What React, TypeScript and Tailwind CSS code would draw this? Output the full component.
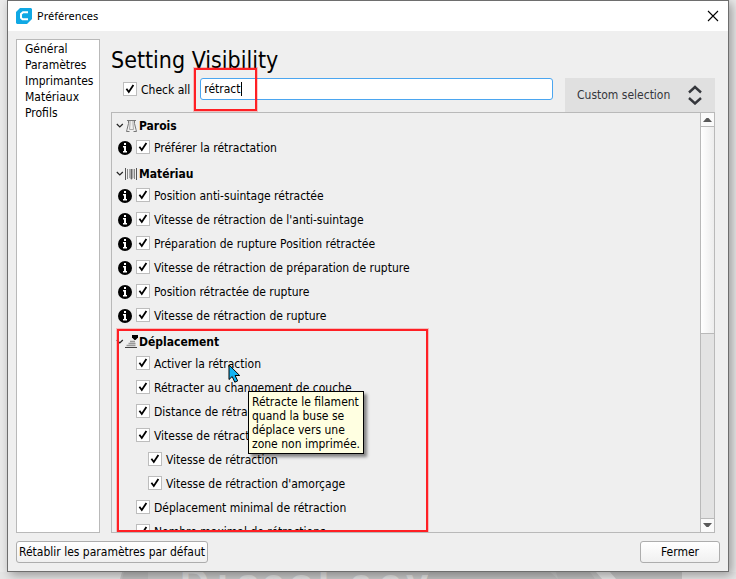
import React, { useState } from 'react';

const pages = ['Général', 'Paramètres', 'Imprimantes', 'Matériaux', 'Profils'];

const sections = [
  {
    name: 'Parois',
    icon: 'walls',
    settings: [{ label: 'Préférer la rétractation', info: true, nested: false }],
  },
  {
    name: 'Matériau',
    icon: 'material',
    settings: [
      { label: 'Position anti-suintage rétractée', info: true, nested: false },
      { label: "Vitesse de rétraction de l'anti-suintage", info: true, nested: false },
      { label: 'Préparation de rupture Position rétractée', info: true, nested: false },
      { label: 'Vitesse de rétraction de préparation de rupture', info: true, nested: false },
      { label: 'Position rétractée de rupture', info: true, nested: false },
      { label: 'Vitesse de rétraction de rupture', info: true, nested: false },
    ],
  },
  {
    name: 'Déplacement',
    icon: 'travel',
    highlighted: true,
    settings: [
      { label: 'Activer la rétraction', info: false, nested: false },
      { label: 'Rétracter au changement de couche', info: false, nested: false },
      { label: 'Distance de rétraction', info: false, nested: false },
      { label: 'Vitesse de rétraction', info: false, nested: false },
      { label: 'Vitesse de rétraction', info: false, nested: true },
      { label: "Vitesse de rétraction d'amorçage", info: false, nested: true },
      { label: 'Déplacement minimal de rétraction', info: false, nested: false },
      { label: 'Nombre maximal de rétractions', info: false, nested: false },
    ],
  },
];

export default function App() {
  const [search, setSearch] = useState('rétract');

  return (
    <div className="h-screen flex flex-col px-[7px] bg-[#ebebeb] overflow-hidden text-xs text-black font-['DejaVu_Sans_Condensed','DejaVu_Sans',sans-serif]">
      {/* Window */}
      <div className="relative z-10 flex-1 min-h-0 flex flex-col border border-[#6e6e6e] bg-[#efefef] shadow-[3px_3px_10px_rgba(0,0,0,0.35)]">
        <header className="h-[30px] shrink-0 flex items-center justify-between px-2 bg-white">
          <div className="flex items-center gap-[5px] font-['Noto_Sans',sans-serif] text-[11px]">
            <Logo />
            <h1>Préférences</h1>
          </div>
          <button aria-label="Fermer la fenêtre">
            <CloseIcon />
          </button>
        </header>

        <div className="flex-1 min-h-0 flex flex-col gap-2 p-2">
          <div className="flex-1 min-h-0 flex gap-[11px]">
            {/* Page list */}
            <nav className="w-[84px] shrink-0 border border-[#b9b9b9] bg-white pl-2 pt-px">
              <ul>
                {pages.map((page) => (
                  <li key={page} className="leading-4">
                    <a href="#">{page}</a>
                  </li>
                ))}
              </ul>
            </nav>

            <main className="flex-1 min-w-0 flex flex-col mr-[5px]">
              <h2 className="pt-[5px] h-[39px] text-[23px] leading-8">Setting Visibility</h2>
              <div className="relative flex items-center h-[34px] pl-3">
                <label className="flex items-center gap-1 pb-2.5">
                  <Check />
                  Check all
                </label>
                <input
                  type="text"
                  aria-label="Filtrer"
                  value={search}
                  onChange={(e) => setSearch(e.target.value)}
                  className="self-start flex-1 min-w-0 h-[22px] ml-2.5 mr-3 px-[3px] rounded-[3px] border border-[#4ba6f0] bg-white outline-none"
                />
                <span className="absolute left-[130px] top-1 w-px h-[14px] bg-black"></span>
                <div className="absolute left-[83px] -top-2.5 w-[63px] h-[43px] border-2 border-[#ff1f24] ring-1 ring-[#ff1f24]/25 pointer-events-none"></div>
                <button className="w-[150px] h-full flex items-center justify-between px-3 bg-[#e0e0e0] text-[#35373c]">
                  Custom selection
                  <SortIcon />
                </button>
              </div>

              {/* Settings */}
              <div className="flex-1 min-h-0 flex border border-[#b9b9b9]">
                <div className="flex-1 min-w-0 overflow-hidden flex flex-col gap-1 pl-1 pt-[3px]">
                  {sections.map((section) => (
                    <Section key={section.name} section={section} />
                  ))}
                </div>
                <Scrollbar />
              </div>
            </main>
          </div>

          <footer className="flex justify-between">
            <button className="h-[22px] px-0.5 rounded-[3px] border border-[#adadad] bg-linear-to-b from-white to-[#f0f0f0] whitespace-nowrap">
              Rétablir les paramètres par défaut
            </button>
            <button className="w-20 h-[22px] rounded-[3px] border border-[#adadad] bg-linear-to-b from-white to-[#f0f0f0]">
              Fermer
            </button>
          </footer>
        </div>
      </div>
      <Backdrop />
    </div>
  );
}

const Check = () => (
  <span className="relative w-[14px] h-[14px] mb-0.5 shrink-0">
    <input type="checkbox" defaultChecked className="block w-[14px] h-[14px] appearance-none border border-[#bdbdbd] bg-white" />
    <svg viewBox="0 0 14 14" className="absolute inset-0 w-[14px] h-[14px] pointer-events-none" fill="none" stroke="#000" strokeWidth="1.8">
      <path d="M3.4 6.8 5.8 10 10.4 3" />
    </svg>
  </span>
);

const Section = ({ section }: { section: (typeof sections)[number] }) => (
  <section className="relative shrink-0">
    <h3 className="h-5 flex items-center font-bold">
      <svg viewBox="0 0 8 8" className="w-2 h-2 mr-px" fill="none" stroke="#222" strokeWidth="1.2">
        <path d="M.8 2 3.8 5 6.8 2" />
      </svg>
      <SectionIcon name={section.icon} />
      {section.name}
    </h3>
    {section.settings.map((setting, i) => (
      <div key={i} className={`h-6 flex items-center ${setting.nested ? 'pl-8' : setting.info ? 'pl-0.5' : 'pl-5'}`}>
        {setting.info && <InfoIcon />}
        <label className="flex items-center gap-1 whitespace-nowrap">
          <Check />
          {setting.label}
        </label>
      </div>
    ))}
    {section.highlighted && (
      <>
        <div className="absolute left-px -top-[3px] w-[311px] h-[203px] border-2 border-[#ff1f24] ring-1 ring-[#ff1f24]/25 pointer-events-none"></div>
        <div role="tooltip" className="absolute left-[132px] top-[59px] w-[116px] h-[63px] pl-[3px] pt-[3px] border border-black bg-[#ffffe1] leading-[14px] whitespace-nowrap shadow-[3px_3px_3px_rgba(0,0,0,0.45)]">
          Rétracte le filament
          <br />
          quand la buse se
          <br />
          déplace vers une
          <br />
          zone non imprimée.
        </div>
        <Pointer />
      </>
    )}
  </section>
);

const Scrollbar = () => (
  <div className="w-[14px] shrink-0 flex flex-col border-l border-[#b9b9b9] bg-[#e3e3e3]">
    <button aria-label="Monter" className="h-[14px] shrink-0 flex items-center justify-center border-b border-[#b9b9b9] bg-[#fafafa]">
      <svg viewBox="0 0 9 5" className="w-[9px] h-[5px]" fill="#595959">
        <path d="M0 5 3.5 1h2L9 5z" />
      </svg>
    </button>
    <div className="basis-[53%] border-b border-[#b9b9b9] bg-linear-to-r from-white to-[#ededed]"></div>
    <div className="basis-[47%]"></div>
    <button aria-label="Descendre" className="h-[14px] shrink-0 flex items-center justify-center border-t border-[#b9b9b9] bg-[#fafafa]">
      <svg viewBox="0 0 9 5" className="w-[9px] h-[5px]" fill="#595959">
        <path d="M0 0h9L5.5 4h-2z" />
      </svg>
    </button>
  </div>
);

const SectionIcon = ({ name }: { name: string }) => (
  <svg viewBox="0 0 14 14" className="w-[14px] h-[14px] shrink-0" fill="none">
    {name === 'walls' && (
      <g stroke="#777">
        <path d="M2 1.5h9M3.5 1.5v3L2 10.500 1.500 12.500h3M9.500 1.500v3L11 10.500l.5 2h-3" />
        <path d="M5 2v3L4.500 10.500h4L8 5V2" stroke="#aaa" />
      </g>
    )}
    {name === 'material' && (
      <g>
        <path d="M.5 1v12M11.5 1v12" stroke="#555" />
        <path d="M2.5 2v10M9.5 2v10" stroke="#888" />
        <path d="M4 2h4.500v8.500L6.500 13 4 10.500z" fill="#aaa" />
        <path d="M6.500 2v10" stroke="#666" />
      </g>
    )}
    {name === 'travel' && (
      <g>
        <path d="M7 0h6v2.500L10.500 5h-1L7 2.500z" fill="#000" />
        <path d="M5 6.500h5M3.500 8.500h7M1.500 10.500h9" stroke="#999" strokeWidth="1.500" />
        <path d="M0 12.500h12" stroke="#444" />
      </g>
    )}
  </svg>
);

const InfoIcon = () => (
  <svg viewBox="0 0 14 14" className="w-[14px] h-[14px] mr-1 shrink-0">
    <circle cx="7" cy="7" r="7" fill="#000" />
    <path d="M6 2h2v2H6zM5 5h3v5h1v1.500H5V10h1V6.500H5z" fill="#fff" />
  </svg>
);

const SortIcon = () => (
  <svg viewBox="0 0 16 20" className="w-4 h-5" fill="none" stroke="#35373c" strokeWidth="2.4">
    <path d="M2 7.500 8 2l6 5.500M2 13l6 5.500L14 13" />
  </svg>
);

const CloseIcon = () => (
  <svg viewBox="0 0 12 12" className="w-3 h-3 mr-px" fill="none" stroke="#000" strokeWidth="1.1">
    <path d="M1 1 11 11M11 1 1 11" />
  </svg>
);

const Logo = () => (
  <svg viewBox="0 0 16 16" className="w-4 h-4">
    <path d="M4 0h11l1 1v10l-5 5H1l-1-1V4z" fill="#10a8e4" />
    <path d="M12 4.300H7L5 6v3.800L6.500 11.300H12" fill="none" stroke="#fff" strokeWidth="2" />
  </svg>
);

const Pointer = () => (
  <svg viewBox="0 0 13 20" className="absolute left-28 top-8 w-[13px] h-5 pointer-events-none">
    <path d="M1 1v14.500l3.200-3 2.600 5.700 2.900-1.300-2.600-5.400h4.600z" fill="#12b4f5" stroke="#000" />
  </svg>
);

// Wallpaper showing under the window
const Backdrop = () => (
  <svg viewBox="0 0 736 7" preserveAspectRatio="xMidYMin slice" className="h-[7px] shrink-0 -mx-[7px]">
    <path d="M0 0h736v7H0z" fill="#e6e6e6" />
    <path d="M122 0h474l6 7H120zM610 0h72v7h-66z" fill="#cacaca" />
    <path d="M124 0h24v7h-26zM430 0h120l8 7H425zM556 0h34l5 7h-37z" fill="#c0c0c0" />
    <g fill="#e4e4e4" fontFamily="Liberation Sans" fontWeight="bold" fontSize="40">
      <text y="25" x="180 217 237 262 289 318 350 379 406">DiscoLacy</text>
    </g>
  </svg>
);
